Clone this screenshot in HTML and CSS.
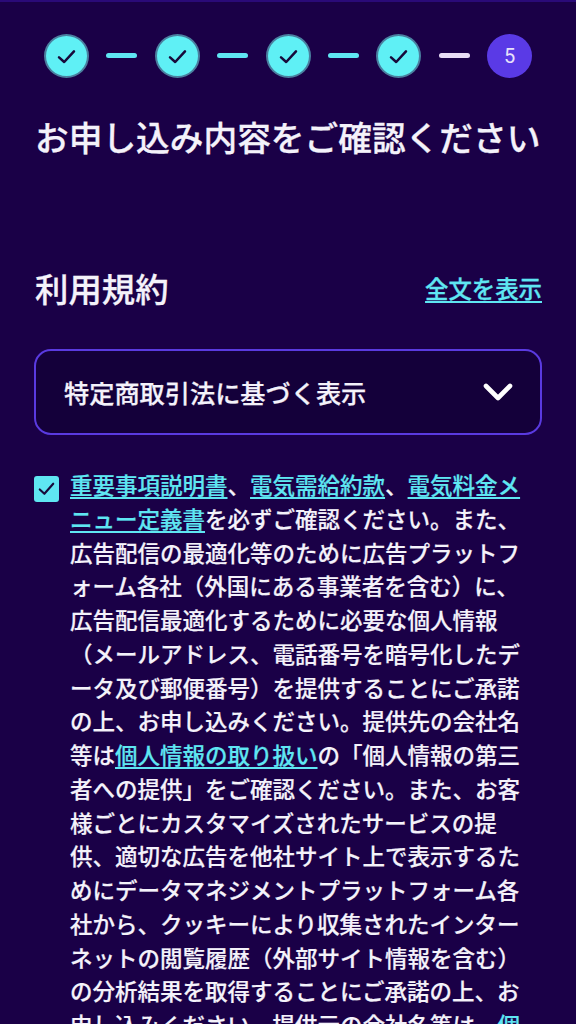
FILE: index.html
```html
<!DOCTYPE html>
<html lang="ja">
<head>
<meta charset="utf-8">
<title>お申し込み内容をご確認ください</title>
<link rel="stylesheet" href="styles.css">
</head>
<body>
<main class="page">
  <ol class="steps">
    <li class="step done"><svg viewBox="0 0 20 20" class="tick"><path d="M3.5 10.8 8 14.8 16.5 5.5"/></svg></li>
    <li class="bar"></li>
    <li class="step done"><svg viewBox="0 0 20 20" class="tick"><path d="M3.5 10.8 8 14.8 16.5 5.5"/></svg></li>
    <li class="bar"></li>
    <li class="step done"><svg viewBox="0 0 20 20" class="tick"><path d="M3.5 10.8 8 14.8 16.5 5.5"/></svg></li>
    <li class="bar"></li>
    <li class="step done"><svg viewBox="0 0 20 20" class="tick"><path d="M3.5 10.8 8 14.8 16.5 5.5"/></svg></li>
    <li class="bar pending"></li>
    <li class="step current">5</li>
  </ol>
  <h1 class="title">お申し込み内容をご確認ください</h1>
  <div class="terms-head">
    <h2 class="terms-title">利用規約</h2>
    <a class="link show-all" href="#">全文を表示</a>
  </div>
  <button class="accordion" type="button">
    <span>特定商取引法に基づく表示</span>
    <svg class="chevron" viewBox="0 0 30 20"><path d="M3 4 15 16 27 4"/></svg>
  </button>
  <div class="consent">
    <span class="checkbox"><svg viewBox="0 0 26 26" class="box-tick"><path d="M6 13.5 10.8 18 20 7.5"/></svg></span>
    <p class="consent-text"><a class="link" href="#">重要事項説明書</a>、<a class="link" href="#">電気需給約款</a>、<a class="link" href="#">電気料金メ<br>ニュー定義書</a>を必ずご確認ください。また、<br>広告配信の最適化等のために広告プラットフ<br>ォーム各社（外国にある事業者を含む）に、<br>広告配信最適化するために必要な個人情報<br>（メールアドレス、電話番号を暗号化したデ<br>ータ及び郵便番号）を提供することにご承諾<br>の上、お申し込みください。提供先の会社名<br>等は<a class="link" href="#">個人情報の取り扱い</a>の「個人情報の第三<br>者への提供」をご確認ください。また、お客<br>様ごとにカスタマイズされたサービスの提<br>供、適切な広告を他社サイト上で表示するた<br>めにデータマネジメントプラットフォーム各<br>社から、クッキーにより収集されたインター<br>ネットの閲覧履歴（外部サイト情報を含む）<br>の分析結果を取得することにご承諾の上、お<br>申し込みください。提供元の会社名等は、<a class="link" href="#">個</a></p>
  </div>
</main>
</body>
</html>
```
FILE: styles.css
```css
* { box-sizing: border-box; }
html, body { margin: 0; padding: 0; height: 1024px; overflow: hidden; }
body {
  background: #1a0047;
  color: #f4f2fa;
  font-family: "Noto Sans CJK JP", "Noto Sans", sans-serif;
}
.page {
  height: 1024px;
  overflow: hidden;
  border-top: 2px solid #2a0a78;
  padding: 32px 34px 0;
}
.steps {
  list-style: none;
  margin: 0;
  padding: 0 10px;
  display: flex;
  align-items: center;
  justify-content: space-between;
}
.step {
  width: 45px;
  height: 44px;
  border-radius: 50%;
  display: flex;
  align-items: center;
  justify-content: center;
  flex: none;
}
.done { background: #5ff0f5; border: 2px solid #4a7f9f; }
.current {
  background: #5a3ae6;
  color: #e8e2fb;
  font-family: "Roboto", sans-serif;
  font-size: 20px;
}
.tick { width: 23px; height: 23px; }
.tick path, .box-tick path {
  fill: none;
  stroke: #170a3a;
  stroke-width: 2.2;
  stroke-linecap: round;
  stroke-linejoin: round;
}
.bar { width: 31px; height: 5px; margin-top: -2px; border-radius: 3px; background: #5fe6f2; flex: none; }
.bar.pending { background: #e8dcf5; }
.title {
  margin: 34px 0 0 1px;
  font-size: 33.7px;
  line-height: 50px;
  font-weight: 500;
  white-space: nowrap;
  -webkit-text-stroke: 0.3px #f4f2fa;
}
.terms-head {
  margin-top: 102px;
  display: flex;
  align-items: center;
  justify-content: space-between;
}
.terms-title {
  margin: 0 0 0 1px;
  font-size: 33.4px;
  line-height: 48px;
  font-weight: 500;
  -webkit-text-stroke: 0.3px #f4f2fa;
}
.link { color: #5fe6f2; text-decoration: underline; text-underline-offset: 3px; }
.show-all { font-size: 23.4px; font-weight: 500; line-height: 34px; -webkit-text-stroke: 0.3px #5fe6f2; }
.accordion {
  margin-top: 37px;
  width: 100%;
  height: 86px;
  background: #14003a;
  border: 2.5px solid #5a3ae0;
  border-radius: 17px;
  padding: 0 27px 0 28px;
  display: flex;
  align-items: center;
  justify-content: space-between;
  color: #f4f2fa;
  font-family: inherit;
  font-size: 25.2px;
  font-weight: 500;
  -webkit-text-stroke: 0.25px #f4f2fa;
}
.chevron { width: 30px; height: 20px; }
.chevron path {
  fill: none;
  stroke: #fff;
  stroke-width: 4.6;
  stroke-linecap: round;
  stroke-linejoin: round;
}
.consent { margin-top: 33px; display: flex; align-items: flex-start; gap: 11px; }
.checkbox {
  flex: none;
  width: 25px;
  height: 26px;
  margin-top: 8px;
  background: #5fe6f2;
  border-radius: 3px;
  display: flex;
}
.box-tick { width: 100%; height: 100%; }
.consent-text {
  margin: 0;
  font-size: 22.5px;
  line-height: 33.75px;
  font-weight: 500;
  white-space: nowrap;
  -webkit-text-stroke: 0.2px currentColor;
}
```
